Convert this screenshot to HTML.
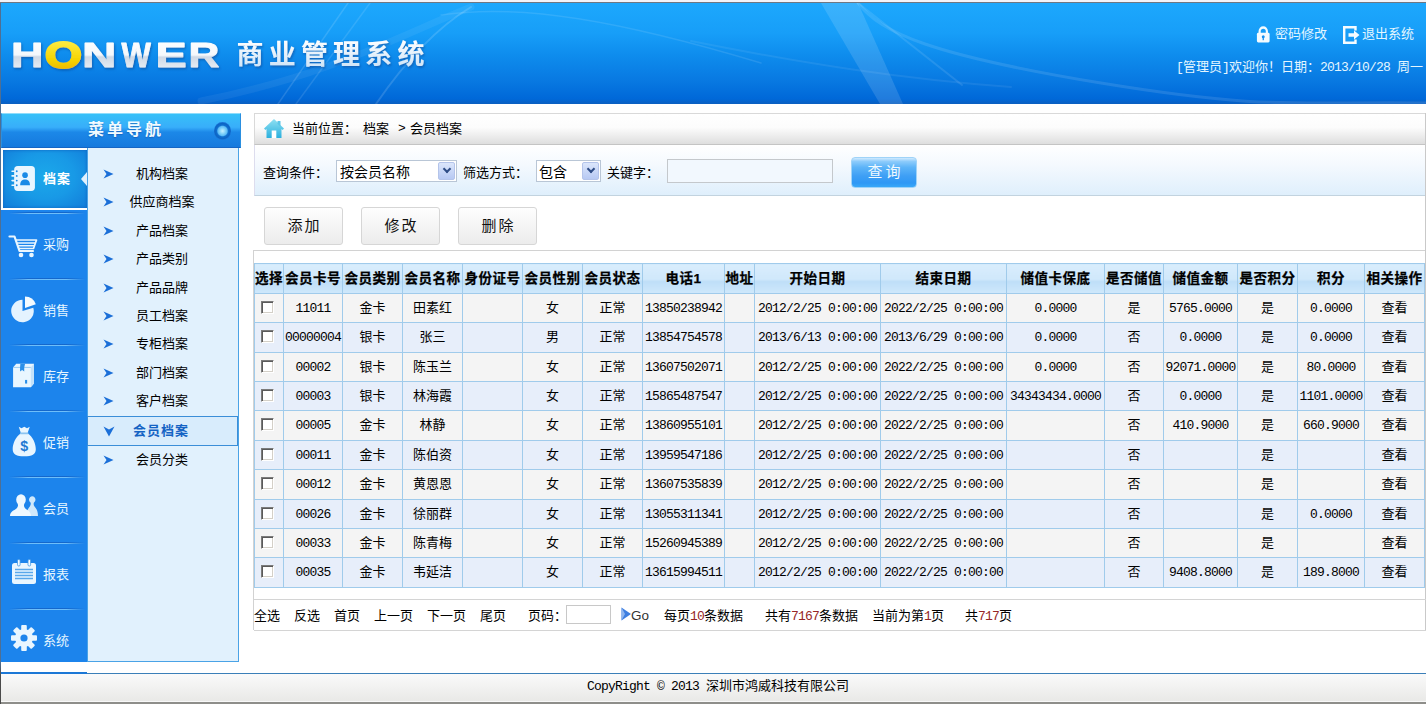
<!DOCTYPE html>
<html lang="zh-CN">
<head>
<meta charset="utf-8">
<title>HONWER 商业管理系统</title>
<style>
*{box-sizing:border-box;margin:0;padding:0}
html,body{width:1426px;height:704px;overflow:hidden;background:#fff}
body{font-family:"Liberation Sans","Noto Sans CJK SC",sans-serif;font-size:12px;color:#000;position:relative}
.abs{position:absolute}
#topstrip{left:0;top:0;width:1426px;height:3px;background:#f3f3f8;border-bottom:1px solid #6f7782}
#leftedge{left:0;top:3px;width:1px;height:701px;background:linear-gradient(#4f6f93 0,#4f6f93 94%,#4a4a4a 96%)}
#header{left:1px;top:3px;width:1425px;height:101px;background:linear-gradient(#1da8fd 0%,#179ef8 30%,#0e8ced 52%,#0878e1 78%,#0068d8 95%,#0b5fc0 100%);overflow:hidden}
#logo{left:12px;top:37px;height:34px;color:#fff}
#hdr-right{right:12px;top:24px;color:#fff;text-align:right;font-size:12px}
/* sidebar */
#navtitle{left:1px;top:113px;width:240px;height:35px;background:linear-gradient(#37c0f8 0%,#38aefa 40%,#1c88e8 55%,#1579dd 100%);border:1px solid #2a8fe0;border-top-color:#8fdcfb;border-bottom-color:#1565c4;color:#f2fbff;text-shadow:0 1px 1px rgba(10,70,160,.5);font-weight:bold;font-size:16px;letter-spacing:3px;line-height:32px}
#leftcol{left:1px;top:148px;width:86px;height:514px;background:#1c84ec}
#submenu{left:87px;top:148px;width:152px;height:514px;background:#e1f1fd;border:1px solid #4aa3e6;border-top:none}
.sm{position:absolute;left:0;width:150px;height:28px;line-height:28px;font-size:13px}
.sm span{position:absolute;left:-1px;width:150px;text-align:center}
/* main */
#crumb{left:254px;top:113px;width:1172px;height:32px;border:1px solid #d9d9d9;border-right:none;background:linear-gradient(#fff 0%,#fcfcfc 45%,#dedede 100%);border-bottom-color:#c4c4c4;line-height:30px;font-size:13px}
#search{left:254px;top:145px;width:1172px;height:51px;background:linear-gradient(#ffffff 0%,#f4f9fe 40%,#dfeffc 100%);border-bottom:1px solid #c2d3df;border-left:1px solid #dde;font-size:13px}
.btn{position:absolute;top:207px;width:79px;height:38px;border:1px solid #d6d6d6;border-radius:3px;background:linear-gradient(#fefefe,#ececec);text-align:center;line-height:36px;font-size:15px;letter-spacing:2px;padding-left:2px;color:#111}
#tbl{left:254px;top:263px;border-collapse:collapse;table-layout:fixed;font-size:12px}
#tbl{width:1171px}
#tbl td,#tbl th{border:1px solid #a0cbeb;text-align:center;padding:0;white-space:nowrap;overflow:hidden;font-size:13px}
#tbl td.n{font-family:"Liberation Mono",monospace;letter-spacing:-0.8px}
.cb{display:inline-block;width:13px;height:13px;background:#fff;border:1px solid #fff;border-top-color:#7b7b7b;border-left-color:#7b7b7b;box-shadow:inset 1px 1px 0 #5a5a5a, inset -1px -1px 0 #d4d0c8;vertical-align:middle;margin-right:4px}
#tbl th{background:linear-gradient(#d9edfc 0%,#d0e8fb 52%,#bedef8 58%,#cfe8fb 100%);font-weight:bold;-webkit-text-stroke:.25px #000;font-size:13.5px;letter-spacing:.5px;padding-bottom:4px}
#tbl td{padding-bottom:4px}
#tbl td.n{padding-bottom:0}
#tbl tr.o td{background:#f4f4f4}
#tbl tr.e td{background:#e7eefa}
#pager{left:254px;top:599px;width:1172px;height:32px;border:1px solid #d4d4d4;border-right:none;border-left:none;line-height:32px;font-size:13px}
#footer{left:1px;top:673px;width:1425px;height:28px;border-top:1px solid #3b7fb8;background:linear-gradient(#fafafa,#e9e9e7);text-align:center;line-height:26px;font-size:12px}
#botstrip{left:1px;top:701px;width:1425px;height:3px;background:#8e8e8a;border-top:1px solid #f8f8f8}

.mi{position:absolute;left:0;width:86px;height:66px;color:#e6f6ff;font-size:13px}
.mi b,.mi span{position:absolute;left:42px;top:24px;line-height:20px;font-weight:normal;white-space:nowrap}
.mi svg{position:absolute;overflow:visible}
.sep{position:absolute;left:8px;width:76px;height:2px;background:linear-gradient(90deg,rgba(20,100,200,0),rgba(20,100,200,.9) 25%,rgba(20,100,200,.9) 75%,rgba(20,100,200,0));}
.sep:after{content:"";position:absolute;left:0;top:1px;width:76px;height:1px;background:linear-gradient(90deg,rgba(120,200,255,0),rgba(120,200,255,.9) 25%,rgba(120,200,255,.9) 75%,rgba(120,200,255,0))}
.arr{position:absolute;left:15px;top:8px}
.lbl{position:absolute;white-space:nowrap;font-size:13px;line-height:20px}
.sel{position:absolute;top:160px;height:22px;border:1px solid #b9c6d6;background:#fff;font-size:14px;line-height:22px;padding-left:3px}
.sel i{position:absolute;right:1px;top:1px;width:17px;height:18px;border-radius:2px;background:linear-gradient(#dbe6fb,#b7c9f3);border:1px solid #b4c4ea}
.sel i:after{content:"";position:absolute;left:4.500px;top:3px;width:4px;height:4px;border-right:2px solid #2e4c86;border-bottom:2px solid #2e4c86;transform:rotate(45deg)}
.pg{position:absolute;top:0;white-space:nowrap}
.pg em{font-style:normal;color:#962626;font-family:"Liberation Mono",monospace;letter-spacing:-0.8px}
.n{font-family:"Liberation Mono",monospace;letter-spacing:-0.8px}
</style>
</head>
<body>
<div class="abs" id="topstrip"></div>
<div class="abs" id="header">
<svg class="abs" style="left:0;top:0" width="1425" height="101" viewBox="0 0 1425 101">
<g fill="none" stroke="#fff" stroke-linecap="round">
<path d="M277 101 L347 0" stroke-opacity=".13" stroke-width="1.5"/>
<path d="M295 101 L369 0" stroke-opacity=".11" stroke-width="1.5"/>
<path d="M375 101 C410 50 440 22 470 4" stroke-opacity=".14" stroke-width="2"/>
<path d="M440 12 C520 0 620 18 760 60" stroke-opacity=".10" stroke-width="1.500"/>
<path d="M200 98 C330 72 400 32 470 4" stroke-opacity=".06" stroke-width="7"/>
<path d="M857 0 C880 30 930 52 1100 80 S1300 98 1425 100" stroke-opacity=".11" stroke-width="3"/>
<path d="M857 0 L961 82" stroke-opacity=".10" stroke-width="2"/>
<path d="M690 38 C800 60 900 76 1010 84" stroke-opacity=".07" stroke-width="2"/>
</g>
<path d="M820 0 L857 0 L902 101 L879 101 Z" fill="#fff" fill-opacity=".13"/>
</svg>
<svg class="abs" style="left:0;top:30px" width="440" height="50" viewBox="0 0 440 50">
<defs>
<linearGradient id="lg1" x1="0" y1="0" x2="0" y2="1"><stop offset="0" stop-color="#ffffff"/><stop offset=".5" stop-color="#f4f8fc"/><stop offset=".55" stop-color="#cfd9e6"/><stop offset="1" stop-color="#f2f6fa"/></linearGradient>
<linearGradient id="lg3" x1="0" y1="0" x2="0" y2="1"><stop offset="0" stop-color="#ffffff"/><stop offset="1" stop-color="#cbe2f7"/></linearGradient><linearGradient id="lg2" x1="0" y1="0" x2="0" y2="1"><stop offset="0" stop-color="#fff35a"/><stop offset=".6" stop-color="#f6d400"/><stop offset="1" stop-color="#e8a800"/></linearGradient>
<filter id="sh" x="-5%" y="-20%" width="110%" height="150%"><feDropShadow dx="1" dy="1.5" stdDeviation="1" flood-color="#0a3c8a" flood-opacity=".55"/></filter>
</defs>
<g filter="url(#sh)" font-family="'Liberation Sans',sans-serif" font-weight="bold" font-size="34.5" fill="url(#lg1)" stroke="url(#lg1)" stroke-width="0.9" stroke-linejoin="round">
<text transform="translate(10,34) scale(1.3,1)" y="0" x="0">H</text>
<text transform="translate(44,35) scale(1.28,1)" y="0" x="0" font-size="37" fill="url(#lg2)" stroke="url(#lg2)" stroke-width="2.2">O</text>
<text transform="translate(81,34) scale(1.38,1)" y="0" x="0">N</text>
<text transform="translate(120.5,34) scale(0.9,1)" y="0" x="0">W</text>
<text transform="translate(154.5,34) scale(1.36,1)" y="0" x="0">E</text>
<text transform="translate(187.5,34) scale(1.24,1)" y="0" x="0">R</text>
</g>
<text filter="url(#sh)" x="235.5" y="30.5" font-family="'Liberation Sans','Noto Sans CJK SC',sans-serif" font-weight="bold" font-size="27" letter-spacing="5.2" fill="url(#lg3)">商业管理系统</text>
</svg>
<div class="abs" style="left:1274px;top:21px;color:#e4f6ff;font-size:13px;line-height:20px;white-space:nowrap">密码修改</div>
<div class="abs" style="left:1361px;top:21px;color:#e4f6ff;font-size:13px;line-height:20px;white-space:nowrap">退出系统</div>
<svg class="abs" style="left:1254.500px;top:23px" width="14.500" height="17.500" viewBox="0 0 16 18" preserveAspectRatio="none"><path d="M4 8 V5.5 a4 4 0 0 1 8 0 V8" fill="none" stroke="#f4fbff" stroke-width="2.4"/><rect x="1" y="7" width="14" height="10" rx="1.5" fill="#f4fbff"/><circle cx="8" cy="11" r="1.6" fill="#1690f0"/><rect x="7.3" y="11" width="1.4" height="3.6" fill="#1690f0"/></svg>
<svg class="abs" style="left:1341px;top:23px" width="18" height="18" viewBox="0 0 18 18"><path d="M13.5 4.500 V1.2 H2.2 V16.8 H13.5 V13.500" fill="none" stroke="#f4fbff" stroke-width="2.4"/><path d="M6.5 7.300 H12 V4.500 L17.5 9 L12 13.500 V10.700 H6.5 Z" fill="#f4fbff"/></svg>
<div class="abs" style="right:3px;top:54px;color:#e4f6ff;font-size:13px;line-height:20px;white-space:nowrap"><span class="n">[</span>管理员<span class="n">]</span>欢迎你！日期：<span class="n">2013/10/28 </span>周一</div>
</div>
<div class="abs" id="leftedge"></div>
<div class="abs" id="navtitle"><span class="abs" style="left:86px;top:0;white-space:nowrap">菜单导航</span><i class="abs" style="left:211.5px;top:8px;width:17.5px;height:17.5px;border-radius:50%;background:radial-gradient(circle closest-side at 50% 50%,#c8f0ff 0,#8ad6fb 30%,#5cbcf6 55%,#1070d0 68%,#0c64c4 90%,#1872d4 100%)"></i></div>
<div class="abs" id="leftcol">
<div class="abs" style="left:0;top:0;width:86px;height:62px;background:#fff"></div>
<div class="abs" style="left:2px;top:2px;width:84px;height:58px;background:radial-gradient(ellipse at 50% 45%,#1ba8ea 0,#1899e6 50%,#127cd9 100%);box-shadow:inset 0 0 3px #0f63bd"></div>
<div class="abs" style="left:80px;top:24px;width:0;height:0;border-top:7px solid transparent;border-bottom:7px solid transparent;border-right:6px solid #e1f1fd"></div>
<div class="mi" style="top:-3px"><svg style="left:9.5px;top:19.5px" width="25" height="27" viewBox="0 0 24 26"><rect x="3" y="1" width="20" height="24" rx="3.5" fill="#e9f6ff"/><circle cx="13.5" cy="9.8" r="2.7" fill="#1a8ae6"/><path d="M8.8 19.500 c0-4.200 2-5.600 4.700-5.600 s4.700 1.400 4.700 5.600z" fill="#1a8ae6"/><g stroke="#e9f6ff" stroke-width="1.6" stroke-linecap="round"><path d="M1 6h4M1 10.500h4M1 15h4M1 19.500h4"/></g><g fill="#1a8ae6"><circle cx="5.5" cy="6" r=".9"/><circle cx="5.5" cy="10.500" r=".9"/><circle cx="5.5" cy="15" r=".9"/><circle cx="5.5" cy="19.500" r=".9"/></g></svg><b style="font-weight:bold;letter-spacing:1px;color:#fff">档案</b></div>
<div class="mi" style="top:63px"><svg style="left:6.5px;top:22.500px" width="30" height="24" viewBox="0 0 30 24"><g fill="none" stroke="#e9f6ff" stroke-linecap="round" stroke-linejoin="round"><path d="M1.500 2.500 H6.500 L11.500 17 H25" stroke-width="2.200"/><path d="M8 6 H28.500 L25.500 14.500 H10.800" stroke-width="1.700"/><path d="M9 9 H27.300 M10 11.800 H26.300" stroke-width="1.500"/></g><circle cx="13" cy="21" r="2.300" fill="#e9f6ff"/><circle cx="23.500" cy="21" r="2.300" fill="#e9f6ff"/></svg><span>采购</span></div>
<div class="sep" style="top:64px"></div>
<div class="mi" style="top:129px"><svg style="left:10px;top:18px" width="26" height="29" viewBox="0 0 26 28"><path d="M11.500 15.500 V4.200 A11.300 11.300 0 1 0 22.300 12.200 Z" fill="#e4f3ff"/><path d="M14 12.500 V1 A11.500 11.500 0 0 1 24.800 8.800 Z" fill="#f4fbff"/></svg><span>销售</span></div>
<div class="sep" style="top:130px"></div>
<div class="mi" style="top:195px"><svg style="left:10px;top:19px" width="25" height="27.500" viewBox="0 0 24 26"><path d="M2 5 L5 1.500 H22 V20.500 L19 24 H2 Z" fill="#e9f6ff"/><path d="M19 5 L22 1.500 V20.500 L19 24 Z" fill="#c4e2fa"/><path d="M2 5 H19" stroke="#9cccf2" stroke-width="1" /><path d="M9 1.500 h4.500 l-.8 3.500 v4 l-2-1.500 l-2 1.500 v-4z" fill="#2b8fe8"/><rect x="13.500" y="17" width="2" height="3.500" fill="#2b8fe8"/></svg><span>库存</span></div>
<div class="sep" style="top:196px"></div>
<div class="mi" style="top:261px"><svg style="left:10px;top:15.500px" width="26.500" height="33" viewBox="0 0 24 30"><path d="M7 1.500 L9.500 3 L12 1.500 L14.500 3 L17 1.500 L15 7.500 C20 11 22.500 17 22.500 22 C22.500 26.500 19 28.500 12 28.500 S1.500 26.500 1.500 22 C1.500 17 4 11 9 7.500 Z" fill="#e9f6ff"/><rect x="8.300" y="6.800" width="7.400" height="1.600" fill="#8cc4f0"/><text x="12" y="23.500" text-anchor="middle" font-family="'Liberation Sans',sans-serif" font-weight="bold" font-size="13" fill="#2179d2">$</text></svg><span>促销</span></div>
<div class="sep" style="top:262px"></div>
<div class="mi" style="top:327px"><svg style="left:7.500px;top:18.500px" width="30" height="24" viewBox="0 0 30 24"><path d="M21.500 8.500 a3 3.500 0 1 1 3.500 0 c-.6 1.200-.5 2.500.5 4 c1.500 2 3.500 4 3.500 9.500 H17 c0-5 2.500-7.500 3.800-9.500 c1-1.500 1.200-2.800.7-4z" fill="#cfe8fb"/><path d="M8.500 9.500 a4.800 5.500 0 1 1 7 0 c-1 1.800-.6 3.500.8 5 c2.500 2 5.700 3 5.700 7.500 H1 c0-4.500 4-5.500 6.500-7.500 c1.500-1.500 2-3.200 1-5z" fill="#eef8ff"/></svg><span>会员</span></div>
<div class="sep" style="top:328px"></div>
<div class="mi" style="top:393px"><svg style="left:9.500px;top:18px" width="26" height="26" viewBox="0 0 26 26"><rect x="1" y="4" width="24" height="21" rx="2.500" fill="#e9f6ff"/><g stroke="#5aa8ea" stroke-width="1.300"><path d="M4 10.500h18M4 13.500h18M4 16.500h18M4 19.500h18"/></g><rect x="6.500" y="0.500" width="2.600" height="6.500" rx="1.200" fill="#f4fbff" stroke="#3f97e6" stroke-width=".8"/><rect x="17" y="0.500" width="2.600" height="6.500" rx="1.200" fill="#f4fbff" stroke="#3f97e6" stroke-width=".8"/></svg><span>报表</span></div>
<div class="sep" style="top:394px"></div>
<div class="mi" style="top:459px"><svg style="left:8.500px;top:16.500px" width="28" height="28" viewBox="-14 -14 28 28"><g fill="#e9f6ff"><circle r="9"/><g id="t"><rect x="-2.800" y="-13" width="5.600" height="26" rx="1"/></g><use href="#t" transform="rotate(45)"/><use href="#t" transform="rotate(90)"/><use href="#t" transform="rotate(135)"/></g><circle r="3.600" fill="#1c84ec"/></svg><span>系统</span></div>
<div class="sep" style="top:460px"></div>
</div>
<div class="abs" id="submenu">
<div class="sm" style="top:12px"><svg class="arr" style="top:9px" width="11" height="10" viewBox="0 0 11 12" preserveAspectRatio="none"><path d="M0.500 0.500 L10.500 6 L0.500 11.500 L3.500 6 Z" fill="#1b6fd8"/></svg><span>机构档案</span></div>
<div class="sm" style="top:40px"><svg class="arr" style="top:9px" width="11" height="10" viewBox="0 0 11 12" preserveAspectRatio="none"><path d="M0.500 0.500 L10.500 6 L0.500 11.500 L3.500 6 Z" fill="#1b6fd8"/></svg><span>供应商档案</span></div>
<div class="sm" style="top:69px"><svg class="arr" style="top:9px" width="11" height="10" viewBox="0 0 11 12" preserveAspectRatio="none"><path d="M0.500 0.500 L10.500 6 L0.500 11.500 L3.500 6 Z" fill="#1b6fd8"/></svg><span>产品档案</span></div>
<div class="sm" style="top:97px"><svg class="arr" style="top:9px" width="11" height="10" viewBox="0 0 11 12" preserveAspectRatio="none"><path d="M0.500 0.500 L10.500 6 L0.500 11.500 L3.500 6 Z" fill="#1b6fd8"/></svg><span>产品类别</span></div>
<div class="sm" style="top:126px"><svg class="arr" style="top:9px" width="11" height="10" viewBox="0 0 11 12" preserveAspectRatio="none"><path d="M0.500 0.500 L10.500 6 L0.500 11.500 L3.500 6 Z" fill="#1b6fd8"/></svg><span>产品品牌</span></div>
<div class="sm" style="top:154px"><svg class="arr" style="top:9px" width="11" height="10" viewBox="0 0 11 12" preserveAspectRatio="none"><path d="M0.500 0.500 L10.500 6 L0.500 11.500 L3.500 6 Z" fill="#1b6fd8"/></svg><span>员工档案</span></div>
<div class="sm" style="top:182px"><svg class="arr" style="top:9px" width="11" height="10" viewBox="0 0 11 12" preserveAspectRatio="none"><path d="M0.500 0.500 L10.500 6 L0.500 11.500 L3.500 6 Z" fill="#1b6fd8"/></svg><span>专柜档案</span></div>
<div class="sm" style="top:211px"><svg class="arr" style="top:9px" width="11" height="10" viewBox="0 0 11 12" preserveAspectRatio="none"><path d="M0.500 0.500 L10.500 6 L0.500 11.500 L3.500 6 Z" fill="#1b6fd8"/></svg><span>部门档案</span></div>
<div class="sm" style="top:239px"><svg class="arr" style="top:9px" width="11" height="10" viewBox="0 0 11 12" preserveAspectRatio="none"><path d="M0.500 0.500 L10.500 6 L0.500 11.500 L3.500 6 Z" fill="#1b6fd8"/></svg><span>客户档案</span></div>
<div class="sm" style="top:269px;left:-1px;width:151px;height:30px;border:1px solid #3b8ed8;background:#d8ecfc;margin-top:-1px"><svg class="arr" style="left:15px;top:9px" width="12" height="11" viewBox="0 0 12 11"><path d="M0.500 0.500 L6 3.500 L11.500 0.500 L6 10.500 Z" fill="#1b6fd8"/></svg><span style="font-weight:bold;color:#1463c4;letter-spacing:1px;left:-2px;top:0">会员档案</span></div>
<div class="sm" style="top:298px"><svg class="arr" style="top:9px" width="11" height="10" viewBox="0 0 11 12" preserveAspectRatio="none"><path d="M0.500 0.500 L10.500 6 L0.500 11.500 L3.500 6 Z" fill="#1b6fd8"/></svg><span>会员分类</span></div>
</div>
<div class="abs" id="crumb">
<svg class="abs" style="left:7.500px;top:4px" width="22" height="21" viewBox="0 0 22 21"><defs><linearGradient id="hg" x1="0" y1="0" x2="0" y2="1"><stop offset="0" stop-color="#8fe0f2"/><stop offset="1" stop-color="#2bb0de"/></linearGradient></defs><path d="M11 1 L21 10.500 L19.600 12 L18.500 11 V20 H3.500 V11 L2.400 12 L1 10.500 Z" fill="url(#hg)"/><path d="M17.500 3 h-3 v3 l3 2.800z" fill="#5cc6e8"/><rect x="8.700" y="12.500" width="4.600" height="7.500" fill="#fff"/></svg>
<span class="lbl" style="left:37px;top:5px">当前位置：</span><span class="lbl" style="left:108px;top:5px">档案</span><span class="lbl" style="left:143px;top:5px;font-family:'Liberation Mono',monospace">&gt;</span><span class="lbl" style="left:155px;top:5px">会员档案</span>
</div>
<div class="abs" id="search"></div>
<span class="lbl" style="left:263px;top:163px">查询条件：</span>
<div class="sel" style="left:336px;width:121px">按会员名称<i></i></div>
<span class="lbl" style="left:463px;top:163px">筛选方式：</span>
<div class="sel" style="left:536px;width:65px;padding-left:2px">包含<i></i></div>
<span class="lbl" style="left:607px;top:163px">关键字：</span>
<div class="abs" style="left:667px;top:159px;width:166px;height:24px;border:1px solid #c4c8cc;background:#f2f8fe"></div>
<div class="abs" style="left:851px;top:157px;width:66px;height:31px;border:1px solid #9fd3f8;border-radius:4px;background:linear-gradient(#cfeaff 0%,#8ccbfb 12%,#5db4f8 32%,#3e9ff5 62%,#2f98f5 86%,#38a8f8 100%);color:#f0faff;font-size:15px;letter-spacing:3px;text-align:center;line-height:27px;padding-left:3px">查询</div>
<div class="abs" style="left:253px;top:250px;width:1173px;height:1px;background:#d2d2d2"></div>
<div class="abs" style="left:253px;top:250px;width:1px;height:380px;background:#d2d2d2"></div>
<div class="abs" style="left:1425px;top:113px;width:1px;height:517px;background:#c9c9c9"></div>
<div class="btn" style="left:264px">添加</div>
<div class="btn" style="left:361px">修改</div>
<div class="btn" style="left:458px">删除</div>
<table class="abs" id="tbl"><colgroup>
<col style="width:29px">
<col style="width:59px">
<col style="width:60px">
<col style="width:60px">
<col style="width:60px">
<col style="width:60px">
<col style="width:60px">
<col style="width:82px">
<col style="width:30px">
<col style="width:126px">
<col style="width:126px">
<col style="width:98px">
<col style="width:59px">
<col style="width:74px">
<col style="width:60px">
<col style="width:67px">
<col style="width:60px">
</colgroup>
<tr class="h" style="height:30px"><th>选择</th><th>会员卡号</th><th>会员类别</th><th>会员名称</th><th>身份证号</th><th>会员性别</th><th>会员状态</th><th>电话1</th><th>地址</th><th>开始日期</th><th>结束日期</th><th>储值卡保底</th><th>是否储值</th><th>储值金额</th><th>是否积分</th><th>积分</th><th>相关操作</th></tr>
<tr class="o" style="height:29px"><td><i class="cb"></i></td><td class="n">11011</td><td>金卡</td><td>田素红</td><td></td><td>女</td><td>正常</td><td class="n">13850238942</td><td></td><td class="n">2012/2/25 0:00:00</td><td class="n">2022/2/25 0:00:00</td><td class="n">0.0000</td><td>是</td><td class="n">5765.0000</td><td>是</td><td class="n">0.0000</td><td>查看</td></tr>
<tr class="e" style="height:30px"><td><i class="cb"></i></td><td class="n">00000004</td><td>银卡</td><td>张三</td><td></td><td>男</td><td>正常</td><td class="n">13854754578</td><td></td><td class="n">2013/6/13 0:00:00</td><td class="n">2013/6/29 0:00:00</td><td class="n">0.0000</td><td>否</td><td class="n">0.0000</td><td>是</td><td class="n">0.0000</td><td>查看</td></tr>
<tr class="o" style="height:29px"><td><i class="cb"></i></td><td class="n">00002</td><td>银卡</td><td>陈玉兰</td><td></td><td>女</td><td>正常</td><td class="n">13607502071</td><td></td><td class="n">2012/2/25 0:00:00</td><td class="n">2022/2/25 0:00:00</td><td class="n">0.0000</td><td>否</td><td class="n">92071.0000</td><td>是</td><td class="n">80.0000</td><td>查看</td></tr>
<tr class="e" style="height:29px"><td><i class="cb"></i></td><td class="n">00003</td><td>银卡</td><td>林海霞</td><td></td><td>女</td><td>正常</td><td class="n">15865487547</td><td></td><td class="n">2012/2/25 0:00:00</td><td class="n">2022/2/25 0:00:00</td><td class="n">34343434.0000</td><td>否</td><td class="n">0.0000</td><td>是</td><td class="n">1101.0000</td><td>查看</td></tr>
<tr class="o" style="height:30px"><td><i class="cb"></i></td><td class="n">00005</td><td>金卡</td><td>林静</td><td></td><td>女</td><td>正常</td><td class="n">13860955101</td><td></td><td class="n">2012/2/25 0:00:00</td><td class="n">2022/2/25 0:00:00</td><td></td><td>否</td><td class="n">410.9000</td><td>是</td><td class="n">660.9000</td><td>查看</td></tr>
<tr class="e" style="height:29px"><td><i class="cb"></i></td><td class="n">00011</td><td>金卡</td><td>陈伯资</td><td></td><td>女</td><td>正常</td><td class="n">13959547186</td><td></td><td class="n">2012/2/25 0:00:00</td><td class="n">2022/2/25 0:00:00</td><td></td><td>否</td><td></td><td>是</td><td></td><td>查看</td></tr>
<tr class="o" style="height:30px"><td><i class="cb"></i></td><td class="n">00012</td><td>金卡</td><td>黄恩恩</td><td></td><td>女</td><td>正常</td><td class="n">13607535839</td><td></td><td class="n">2012/2/25 0:00:00</td><td class="n">2022/2/25 0:00:00</td><td></td><td>否</td><td></td><td>是</td><td></td><td>查看</td></tr>
<tr class="e" style="height:29px"><td><i class="cb"></i></td><td class="n">00026</td><td>金卡</td><td>徐丽群</td><td></td><td>女</td><td>正常</td><td class="n">13055311341</td><td></td><td class="n">2012/2/25 0:00:00</td><td class="n">2022/2/25 0:00:00</td><td></td><td>否</td><td></td><td>是</td><td class="n">0.0000</td><td>查看</td></tr>
<tr class="o" style="height:29px"><td><i class="cb"></i></td><td class="n">00033</td><td>金卡</td><td>陈青梅</td><td></td><td>女</td><td>正常</td><td class="n">15260945389</td><td></td><td class="n">2012/2/25 0:00:00</td><td class="n">2022/2/25 0:00:00</td><td></td><td>否</td><td></td><td>是</td><td></td><td>查看</td></tr>
<tr class="e" style="height:30px"><td><i class="cb"></i></td><td class="n">00035</td><td>金卡</td><td>韦延洁</td><td></td><td>女</td><td>正常</td><td class="n">13615994511</td><td></td><td class="n">2012/2/25 0:00:00</td><td class="n">2022/2/25 0:00:00</td><td></td><td>否</td><td class="n">9408.8000</td><td>是</td><td class="n">189.8000</td><td>查看</td></tr>
</table>
<div class="abs" id="pager">
<span class="pg" style="left:0px">全选</span>
<span class="pg" style="left:40px">反选</span>
<span class="pg" style="left:80px">首页</span>
<span class="pg" style="left:120px">上一页</span>
<span class="pg" style="left:173px">下一页</span>
<span class="pg" style="left:226px">尾页</span>
<span class="pg" style="left:274px">页码：</span>
<span class="pg" style="left:410px">每页<em>10</em>条数据</span>
<span class="pg" style="left:511px">共有<em>7167</em>条数据</span>
<span class="pg" style="left:618px">当前为第<em>1</em>页</span>
<span class="pg" style="left:711px">共<em>717</em>页</span>
<div class="abs" style="left:312px;top:5px;width:45px;height:19px;border:1px solid #c8c8c8;background:#fff"></div>
<svg class="abs" style="left:367px;top:7px" width="11" height="14" viewBox="0 0 11 14"><path d="M0.500 0.500 L10 7 L0.500 13.500 Z" fill="#3f7fe0"/><path d="M0.500 0.500 L4 7 L0.500 13.500Z" fill="#8fb6f0"/></svg>
<span class="pg" style="left:377px;font-family:'Liberation Sans',sans-serif;font-size:13.5px;color:#333">Go</span>
</div>
<div class="abs" id="footer"><span class="abs" style="left:586px;top:2px;white-space:nowrap;font-size:13px;line-height:20px"><span class="n">CopyRight © 2013 </span>深圳市鸿威科技有限公司</span></div>
<div class="abs" style="left:1px;top:672px;width:86px;height:2px;background:#1c78d6"></div>
<div class="abs" id="botstrip"></div>
</body>
</html>
